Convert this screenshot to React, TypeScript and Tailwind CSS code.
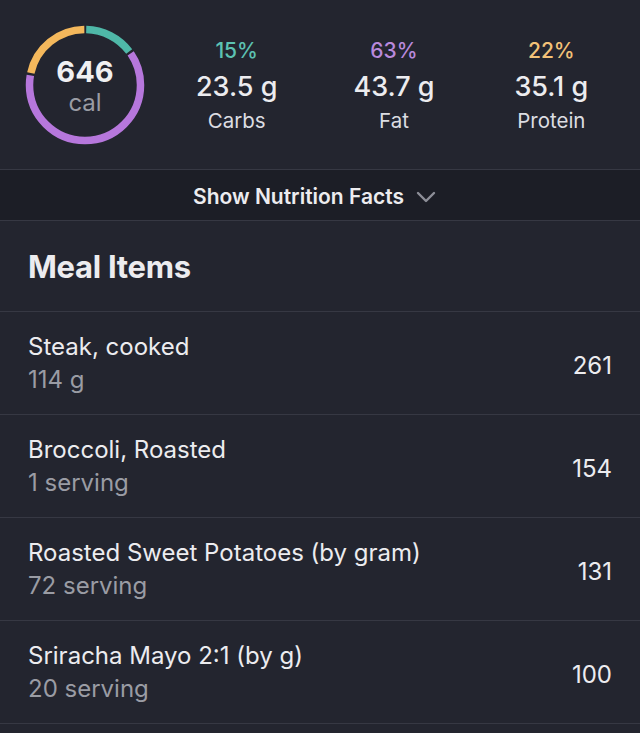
const items = [
  { name: 'Steak, cooked', amount: '114 g', cal: 261 },
  { name: 'Broccoli, Roasted', amount: '1 serving', cal: 154 },
  { name: 'Roasted Sweet Potatoes (by gram)', amount: '72 serving', cal: 131 },
  { name: 'Sriracha Mayo 2:1 (by g)', amount: '20 serving', cal: 100 },
]

const macros = [
  { pct: '15%', grams: '23.5 g', label: 'Carbs', color: 'text-[#5cc2b2]' },
  { pct: '63%', grams: '43.7 g', label: 'Fat', color: 'text-[#b989dc]' },
  { pct: '22%', grams: '35.1 g', label: 'Protein', color: 'text-[#f3c278]' },
]

function CalorieRing() {
  const r = 55.5
  const c = 2 * Math.PI * r
  const gap = 2.5
  // clockwise from 12 o'clock: carbs, fat, protein
  const segs = [
    { frac: 0.15, color: '#4fb8a8' },
    { frac: 0.63, color: '#b677dc' },
    { frac: 0.22, color: '#f4b85c' },
  ]
  let offset = 0
  return (
    <svg width="126" height="126" viewBox="0 0 126 126" className="absolute inset-0">
      <g transform="rotate(-90 63 63)">
        {segs.map((s) => {
          const len = s.frac * c - gap
          const el = (
            <circle
              key={s.color}
              cx="63"
              cy="63"
              r={r}
              fill="none"
              stroke={s.color}
              strokeWidth="7.5"
              strokeDasharray={`${len} ${c - len}`}
              strokeDashoffset={-(offset + gap / 2)}
            />
          )
          offset += s.frac * c
          return el
        })}
      </g>
    </svg>
  )
}

export default function App() {
  return (
    <div
      className="min-h-[733px] w-[640px] bg-[#23252f] text-[#ececef]"
      style={{ fontFamily: 'Inter, "Noto Sans", sans-serif' }}
    >
      <section className="flex h-[170px] items-center border-b border-[#363843] pl-[22px]">
        <div className="relative flex h-[126px] w-[126px] shrink-0 flex-col items-center justify-center">
          <CalorieRing />
          <span className="mt-[4px] text-[29px] leading-[32px] font-bold text-[#f0f0f2]">646</span>
          <span className="text-[24px] leading-[30px] text-[#9a9ca4]">cal</span>
        </div>
        <div className="ml-[10px] grid flex-1 grid-cols-3 pr-[10px]">
          {macros.map((m) => (
            <div key={m.label} className="flex flex-col items-center pt-[3px]">
              <span className={`text-[21px] leading-[24px] font-medium ${m.color}`}>{m.pct}</span>
              <span className="mt-[9px] text-[27px] leading-[30px] font-medium text-[#ececef]">
                {m.grams}
              </span>
              <span className="mt-[6px] text-[20.5px] leading-[26px] text-[#dcdde2]">{m.label}</span>
            </div>
          ))}
        </div>
      </section>

      <button className="flex h-[51px] w-full items-center justify-center gap-[12px] border-b border-[#363843] bg-[#1c1e26] pt-[4px] pr-[11px]">
        <span className="text-[21px] font-semibold text-[#ececef]">Show Nutrition Facts</span>
        <svg width="20" height="12" viewBox="0 0 20 12" fill="none">
          <path d="M2 2l8 8 8-8" stroke="#8d8f98" strokeWidth="2.4" strokeLinecap="round" strokeLinejoin="round" />
        </svg>
      </button>

      <div className="flex h-[91px] items-center border-b border-[#363843] px-[28px]">
        <h2 className="pt-[3px] text-[31px] font-bold tracking-[-0.3px] text-[#ececef]">Meal Items</h2>
      </div>

      <ul>
        {items.map((it) => (
          <li
            key={it.name}
            className="flex h-[103px] items-center justify-between border-b border-[#363843] px-[28px]"
          >
            <div className="flex flex-col pt-[1px]">
              <span className="text-[24px] leading-[28px] text-[#ececef]">{it.name}</span>
              <span className="mt-[5px] text-[24px] leading-[28px] text-[#9a9ca4]">{it.amount}</span>
            </div>
            <span className="pt-[5px] text-[24px] text-[#ececef]">{it.cal}</span>
          </li>
        ))}
      </ul>
    </div>
  )
}
